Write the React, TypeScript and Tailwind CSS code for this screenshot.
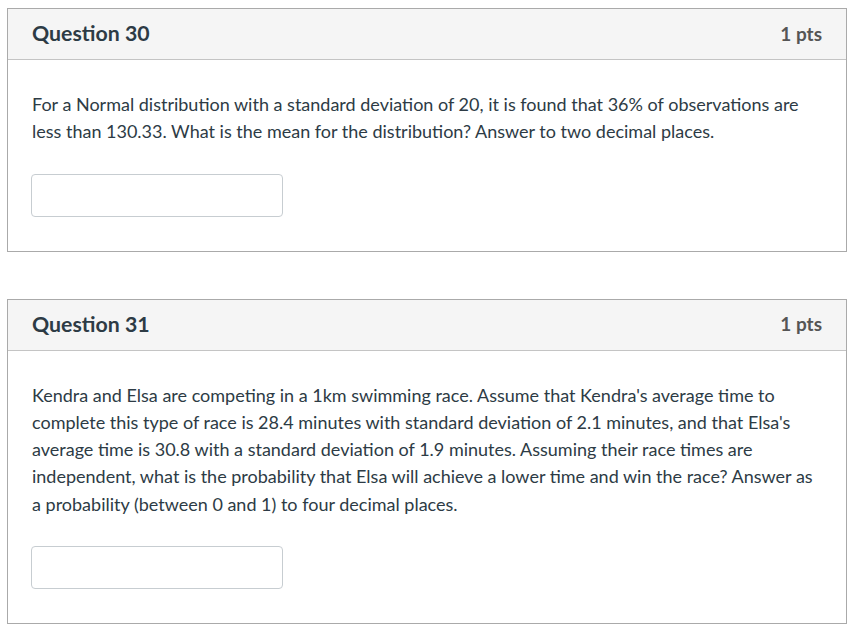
import { useState } from 'react';

interface QuestionCardProps {
  number: number;
  points: number;
  text: string;
}

function QuestionCard({ number, points, text }: QuestionCardProps) {
  const [answer, setAnswer] = useState('');

  return (
    <div className="border border-[#aaaaaa] bg-white">
      {/* Header */}
      <div className="flex h-[51px] items-center justify-between border-b border-[#c4c4c4] bg-[#f5f5f5] px-6">
        <h2 className="text-[21.3px] font-bold text-[#2d3b45]">Question {number}</h2>
        <span className="text-[19px] font-bold text-[#555555]">{points} pts</span>
      </div>

      {/* Body */}
      <div className="px-6 pt-[31px] pb-[34px]">
        <p className="text-[18px] leading-[27.25px] text-[#2d3b45]">{text}</p>
        <input
          type="text"
          value={answer}
          onChange={(e) => setAnswer(e.target.value)}
          className="mt-[28px] -ml-px block h-[43px] w-[252px] rounded border border-[#c7cdd1] bg-white px-3 text-[16px] text-[#2d3b45] outline-none"
        />
      </div>
    </div>
  );
}

export default function App() {
  return (
    <div className="min-h-screen bg-white px-[7px] pt-2 font-['Lato','Liberation_Sans',sans-serif]">
      <div className="flex w-[840px] flex-col gap-[47px]">
        <QuestionCard
          number={30}
          points={1}
          text="For a Normal distribution with a standard deviation of 20, it is found that 36% of observations are less than 130.33. What is the mean for the distribution? Answer to two decimal places."
        />
        <QuestionCard
          number={31}
          points={1}
          text="Kendra and Elsa are competing in a 1km swimming race. Assume that Kendra's average time to complete this type of race is 28.4 minutes with standard deviation of 2.1 minutes, and that Elsa's average time is 30.8 with a standard deviation of 1.9 minutes. Assuming their race times are independent, what is the probability that Elsa will achieve a lower time and win the race? Answer as a probability (between 0 and 1) to four decimal places."
        />
      </div>
    </div>
  );
}
